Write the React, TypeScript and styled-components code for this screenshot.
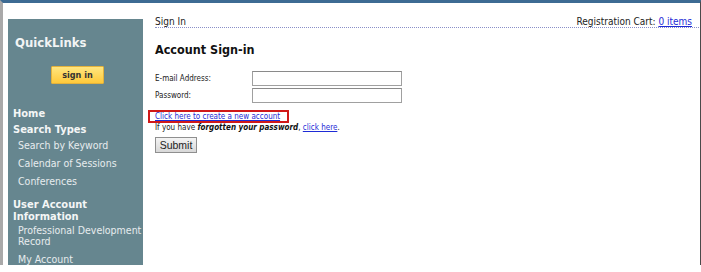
import styled, { createGlobalStyle } from 'styled-components';

const GlobalStyle = createGlobalStyle`
  html, body {
    margin: 0;
    padding: 0;
    background: #ffffff;
  }
  body {
    font-family: "DejaVu Sans Condensed", "DejaVu Sans", sans-serif;
  }
`;

const sideLinks = [
  { label: 'Home', heading: true },
  { label: 'Search Types', heading: true },
  { label: 'Search by Keyword' },
  { label: 'Calendar of Sessions' },
  { label: 'Conferences' },
  { label: 'User Account Information', heading: true, gap: true },
  { label: 'Professional Development Record' },
  { label: 'My Account' },
];

export default function App() {
  return (
    <>
      <GlobalStyle />
      <Frame>
        <Sidebar>
          <SideTitle>QuickLinks</SideTitle>
          <ButtonRow>
            <YellowButton>sign in</YellowButton>
          </ButtonRow>
          <Nav>
            {sideLinks.map((item) =>
              item.heading ? (
                <NavHeading key={item.label} gap={item.gap}>
                  {item.label}
                </NavHeading>
              ) : (
                <NavItem key={item.label}>{item.label}</NavItem>
              )
            )}
          </Nav>
        </Sidebar>
        <Main>
          <TopBar>
            <span>Sign In</span>
            <span>
              Registration Cart: <Link href="#">0 items</Link>
            </span>
          </TopBar>
          <Heading>Account Sign-in</Heading>
          <FormGrid>
            <Label>E-mail Address:</Label>
            <Input type="text" />
            <Label>Password:</Label>
            <Input type="password" />
          </FormGrid>
          <Highlight>
            <Link href="#">Click here to create a new account</Link>
          </Highlight>
          <Note>
            If you have <em>forgotten your password</em>,{' '}
            <Link href="#">click here</Link>.
          </Note>
          <SubmitButton>Submit</SubmitButton>
        </Main>
      </Frame>
    </>
  );
}

const Frame = styled.div`
  width: 697px;
  height: 262px;
  border-top: 3px solid #3d6b93;
  border-left: 3px solid #a9a9a9;
  border-right: 1px solid #4a4a4a;
  display: flex;
  align-items: flex-start;
  overflow: hidden;
`;

const Sidebar = styled.div`
  width: 135px;
  height: 260px;
  margin: 16px 0 0 5px;
  background: #66868f;
  flex-shrink: 0;
  display: flex;
  flex-direction: column;
`;

const SideTitle = styled.div`
  color: #f2f4f4;
  font-weight: bold;
  font-size: 13px;
  padding: 16px 0 0 7px;
  line-height: 16px;
`;

const ButtonRow = styled.div`
  display: flex;
  padding: 15px 0 0 43px;
`;

const YellowButton = styled.button`
  width: 53px;
  height: 18px;
  padding: 0;
  border: 1px solid #e3b23c;
  border-radius: 1px;
  background: linear-gradient(#ffe680, #ffc93a);
  color: #333;
  font-family: "DejaVu Sans Condensed", "DejaVu Sans", sans-serif;
  font-weight: bold;
  font-size: 9px;
`;

const Nav = styled.div`
  display: flex;
  flex-direction: column;
  padding: 24px 0 0 5px;
`;

const NavHeading = styled.div<{ gap?: boolean }>`
  color: #f4f6f6;
  font-weight: bold;
  font-size: 11px;
  line-height: 12px;
  margin: ${({ gap }) => (gap ? '5px 0 2px' : '0 0 4px')};
  padding-right: 40px;
`;

const NavItem = styled.div`
  color: #e6ecee;
  font-size: 10.5px;
  line-height: 11px;
  padding: 0 0 7px 5px;
`;

const Main = styled.div`
  flex: 1;
  margin: 13px 1px 0 12px;
  color: #222;
`;

const TopBar = styled.div`
  display: flex;
  justify-content: space-between;
  font-size: 10px;
  line-height: 11px;
  padding: 0 7px 0 0;
  border-bottom: 1px dotted #8a8fc8;
`;

const Link = styled.a`
  color: #1e2bd6;
  text-decoration: underline;
`;

const Heading = styled.div`
  font-weight: bold;
  font-size: 12.5px;
  color: #111;
  margin: 15px 0 0;
  line-height: 14px;
`;

const FormGrid = styled.div`
  display: grid;
  grid-template-columns: 97px 150px;
  row-gap: 2px;
  align-items: center;
  margin-top: 14px;
`;

const Label = styled.div`
  font-size: 8px;
  color: #222;
`;

const Input = styled.input`
  box-sizing: border-box;
  width: 150px;
  height: 15px;
  margin: 0;
  border: 1px solid #a0a0a0;
  border-top-color: #8a8a8a;
  background: #fff;
`;

const Highlight = styled.div`
  display: inline-block;
  margin: 7px 0 0 -7px;
  padding: 0 7px 0 5px;
  border: 2px solid #d01818;
  font-size: 8px;
  line-height: 9px;
`;

const Note = styled.div`
  font-size: 8px;
  line-height: 9px;
  color: #222;

  em {
    font-weight: bold;
    font-style: italic;
    color: #111;
  }
`;

const SubmitButton = styled.button`
  display: block;
  margin-top: 5px;
  width: 42px;
  height: 16px;
  padding: 0;
  border: 1px solid #8f8f8f;
  background: linear-gradient(#f4f4f4, #d8d8d8);
  font-family: "Liberation Sans", Arial, sans-serif;
  font-size: 10.5px;
  color: #222;
`;
